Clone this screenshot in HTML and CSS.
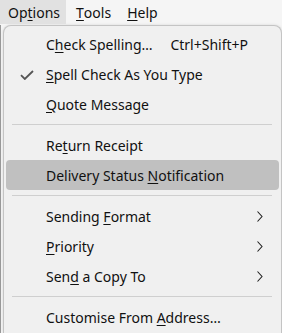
FILE: index.html
```html
<!DOCTYPE html>
<html lang="en">
<head>
  <meta charset="UTF-8">
  <title>Options menu</title>
  <link rel="stylesheet" href="styles.css">
</head>
<body>

  <div class="menubar">
    <span class="menubar-item active">Op<u>t</u>ions</span>
    <span class="menubar-item"><u>T</u>ools</span>
    <span class="menubar-item"><u>H</u>elp</span>
  </div>

  <div class="window">
    <div class="popup">
      <div class="item">
        <span class="label">C<u>h</u>eck Spelling…</span>
        <span class="shortcut">Ctrl+Shift+P</span>
      </div>
      <div class="item">
        <svg class="check" width="14" height="10" viewBox="0 0 14 10">
          <path d="M1 5.2 L4.8 9 L13 1" fill="none" stroke="#555" stroke-width="1.8"/>
        </svg>
        <span class="label"><u>S</u>pell Check As You Type</span>
      </div>
      <div class="item">
        <span class="label"><u>Q</u>uote Message</span>
      </div>
      <div class="sep"></div>
      <div class="item">
        <span class="label">Re<u>t</u>urn Receipt</span>
      </div>
      <div class="item hover">
        <span class="label">Delivery Status <u>N</u>otification</span>
      </div>
      <div class="sep"></div>
      <div class="item">
        <span class="label">Sending <u>F</u>ormat</span>
        <svg class="arrow" width="6" height="11" viewBox="0 0 6 11">
          <path d="M0.5 0.5 L5 5.5 L0.5 10.5" fill="none" stroke="#222" stroke-width="1.1"/>
        </svg>
      </div>
      <div class="item">
        <span class="label"><u>P</u>riority</span>
        <svg class="arrow" width="6" height="11" viewBox="0 0 6 11">
          <path d="M0.5 0.5 L5 5.5 L0.5 10.5" fill="none" stroke="#222" stroke-width="1.1"/>
        </svg>
      </div>
      <div class="item">
        <span class="label">Sen<u>d</u> a Copy To</span>
        <svg class="arrow" width="6" height="11" viewBox="0 0 6 11">
          <path d="M0.5 0.5 L5 5.5 L0.5 10.5" fill="none" stroke="#222" stroke-width="1.1"/>
        </svg>
      </div>
      <div class="sep"></div>
      <div class="item">
        <span class="label">Customise From <u>A</u>ddress…</span>
      </div>
    </div>
  </div>

</body>
</html>
```

FILE: styles.css
```css
body {
  margin: 0;
  background-color: #f5f5f5;
  font-family: 'Noto Sans', sans-serif;
  font-size: 14px;
  color: #111;
  overflow: hidden;
  height: 333px;
}

u {
  text-underline-offset: 2px;
}

.menubar {
  display: flex;
  height: 24px;
  align-items: stretch;
}

.menubar-item {
  display: flex;
  align-items: center;
  padding: 0 6px 0 8px;
  margin-right: 2px;
}

.menubar-item.active {
  background-color: #e1e1e1;
}

.window {
  border-left: 1px solid #999;
  height: 309px;
  box-sizing: border-box;
}

.popup {
  margin: 1px 0 0 2px;
  width: 279px;
  height: 308px;
  box-sizing: border-box;
  background-color: #f0f0f0;
  border: 1px solid #c4c4c4;
  border-bottom: none;
  border-radius: 8px 8px 0 0;
  padding-top: 3px;
  box-shadow: 0 0 3px rgba(0,0,0,0.12);
}

.item {
  position: relative;
  display: flex;
  align-items: center;
  height: 30px;
  padding-left: 42px;
  margin-right: 2px;
  border-radius: 4px;
}

.item.hover {
  background-color: #c0c0c0;
  margin-left: 2px;
  padding-left: 40px;
}

.label {
  flex: 1;
  white-space: nowrap;
}

.shortcut {
  margin-right: 31px;
}

.check {
  position: absolute;
  left: 16px;
  top: 11px;
}

.arrow {
  margin-right: 16px;
}

.sep {
  height: 11px;
  display: flex;
  align-items: center;
  padding: 0 9px 0 8px;
}

.sep::after {
  content: "";
  flex: 1;
  height: 1px;
  background-color: #cfcfcf;
}
```
